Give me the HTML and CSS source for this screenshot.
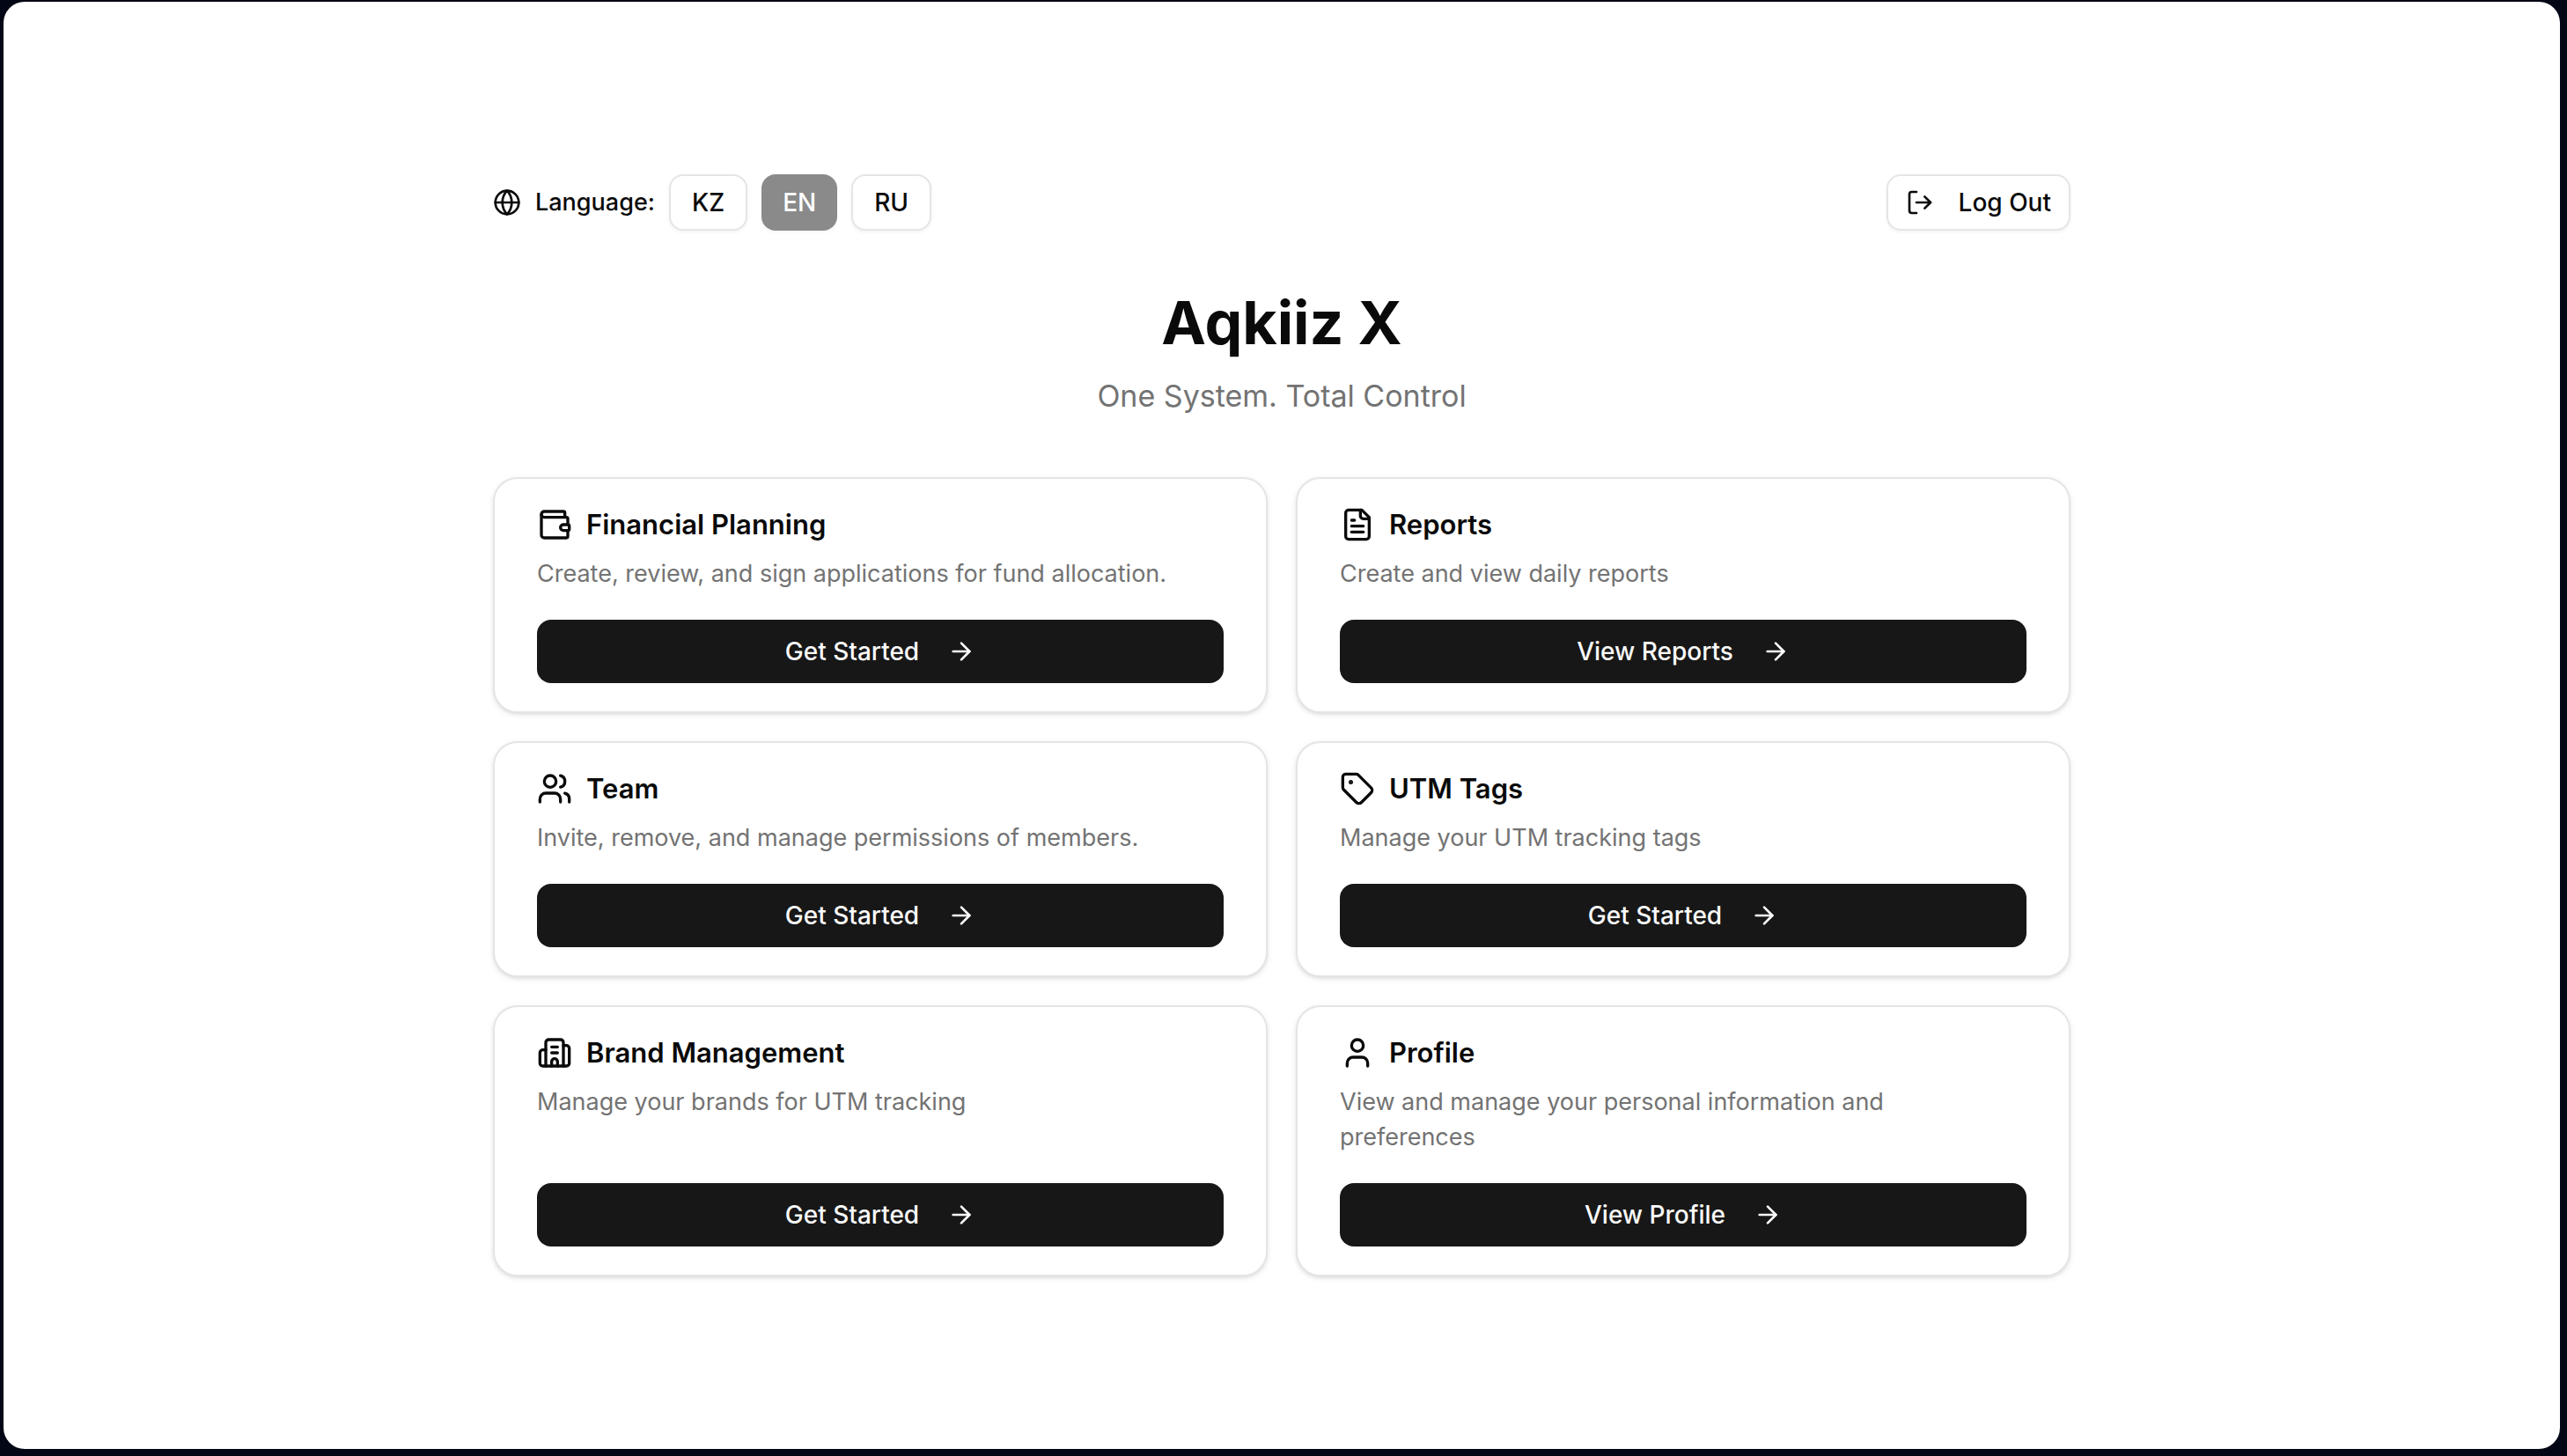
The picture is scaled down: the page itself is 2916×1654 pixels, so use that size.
FILE: index.html
```html
<!DOCTYPE html>
<html lang="en">
<head>
    <meta charset="UTF-8">
    <meta name="viewport" content="width=device-width, initial-scale=1.0">
    <title>Aqkiiz X</title>
    <link rel="stylesheet" href="styles.css">
</head>
<body>
    <div class="page">
        <main class="container">
            <!-- Language switcher and log out -->
            <header class="topbar">
                <div class="languages">
                    <svg class="icon" viewBox="0 0 24 24"><circle cx="12" cy="12" r="10"/><path d="M12 2a14.5 14.5 0 0 0 0 20 14.5 14.5 0 0 0 0-20"/><path d="M2 12h20"/></svg>
                    <span class="label">Language:</span>
                    <button type="button" class="btn-outline">KZ</button>
                    <button type="button" class="btn-outline active" disabled>EN</button>
                    <button type="button" class="btn-outline">RU</button>
                </div>
                <button type="button" class="btn-outline logout">
                    <svg class="icon" viewBox="0 0 24 24"><path d="M9 21H5a2 2 0 0 1-2-2V5a2 2 0 0 1 2-2h4"/><path d="m16 17 5-5-5-5"/><path d="M21 12H9"/></svg>
                    Log Out
                </button>
            </header>

            <div class="hero">
                <h1>Aqkiiz X</h1>
                <p>One System. Total Control</p>
            </div>

            <!-- Sections -->
            <div class="cards">
                <section class="card">
                    <h2>
                        <svg class="icon-lg" viewBox="0 0 24 24"><path d="M19 7V4a1 1 0 0 0-1-1H5a2 2 0 0 0 0 4h15a1 1 0 0 1 1 1v4h-3a2 2 0 0 0 0 4h3a1 1 0 0 0 1-1v-2a1 1 0 0 0-1-1"/><path d="M3 5v14a2 2 0 0 0 2 2h15a1 1 0 0 0 1-1v-4"/></svg>
                        Financial Planning
                    </h2>
                    <p>Create, review, and sign applications for fund allocation.</p>
                    <button type="button" class="btn">Get Started
                        <svg class="icon" viewBox="0 0 24 24"><path d="M5 12h14"/><path d="m12 5 7 7-7 7"/></svg>
                    </button>
                </section>

                <section class="card">
                    <h2>
                        <svg class="icon-lg" viewBox="0 0 24 24"><path d="M15 2H6a2 2 0 0 0-2 2v16a2 2 0 0 0 2 2h12a2 2 0 0 0 2-2V7Z"/><path d="M14 2v4a2 2 0 0 0 2 2h4"/><path d="M10 9H8"/><path d="M16 13H8"/><path d="M16 17H8"/></svg>
                        Reports
                    </h2>
                    <p>Create and view daily reports</p>
                    <button type="button" class="btn">View Reports
                        <svg class="icon" viewBox="0 0 24 24"><path d="M5 12h14"/><path d="m12 5 7 7-7 7"/></svg>
                    </button>
                </section>

                <section class="card">
                    <h2>
                        <svg class="icon-lg" viewBox="0 0 24 24"><path d="M16 21v-2a4 4 0 0 0-4-4H6a4 4 0 0 0-4 4v2"/><circle cx="9" cy="7" r="4"/><path d="M22 21v-2a4 4 0 0 0-3-3.87"/><path d="M16 3.13a4 4 0 0 1 0 7.75"/></svg>
                        Team
                    </h2>
                    <p>Invite, remove, and manage permissions of members.</p>
                    <button type="button" class="btn">Get Started
                        <svg class="icon" viewBox="0 0 24 24"><path d="M5 12h14"/><path d="m12 5 7 7-7 7"/></svg>
                    </button>
                </section>

                <section class="card">
                    <h2>
                        <svg class="icon-lg" viewBox="0 0 24 24"><path d="M12.586 2.586A2 2 0 0 0 11.172 2H4a2 2 0 0 0-2 2v7.172a2 2 0 0 0 .586 1.414l8.704 8.704a2.426 2.426 0 0 0 3.42 0l6.58-6.58a2.426 2.426 0 0 0 0-3.42z"/><circle class="dot" cx="7.5" cy="7.5" r=".5"/></svg>
                        UTM Tags
                    </h2>
                    <p>Manage your UTM tracking tags</p>
                    <button type="button" class="btn">Get Started
                        <svg class="icon" viewBox="0 0 24 24"><path d="M5 12h14"/><path d="m12 5 7 7-7 7"/></svg>
                    </button>
                </section>

                <section class="card">
                    <h2>
                        <svg class="icon-lg" viewBox="0 0 24 24"><path d="M10 12h4"/><path d="M10 8h4"/><path d="M14 21v-3a2 2 0 0 0-4 0v3"/><path d="M6 10H4a2 2 0 0 0-2 2v7a2 2 0 0 0 2 2h16a2 2 0 0 0 2-2V9a2 2 0 0 0-2-2h-2"/><path d="M6 21V5a2 2 0 0 1 2-2h8a2 2 0 0 1 2 2v16"/></svg>
                        Brand Management
                    </h2>
                    <p>Manage your brands for UTM tracking</p>
                    <button type="button" class="btn">Get Started
                        <svg class="icon" viewBox="0 0 24 24"><path d="M5 12h14"/><path d="m12 5 7 7-7 7"/></svg>
                    </button>
                </section>

                <section class="card">
                    <h2>
                        <svg class="icon-lg" viewBox="0 0 24 24"><path d="M19 21v-2a4 4 0 0 0-4-4H9a4 4 0 0 0-4 4v2"/><circle cx="12" cy="7" r="4"/></svg>
                        Profile
                    </h2>
                    <p>View and manage your personal information and preferences</p>
                    <button type="button" class="btn">View Profile
                        <svg class="icon" viewBox="0 0 24 24"><path d="M5 12h14"/><path d="m12 5 7 7-7 7"/></svg>
                    </button>
                </section>
            </div>
        </main>
    </div>
</body>
</html>
```

FILE: styles.css
```css
* {
    box-sizing: border-box;
}

body {
    margin: 0;
    padding: 2px 8px 8px 4px;
    min-height: 100vh;
    display: flex;
    background-color: #030614;
    color: #0a0a0a;
    font-family: Inter, "Liberation Sans", sans-serif;
    font-size: 27px;
    line-height: 40px;
}

h1, h2, p {
    margin: 0;
}

.page {
    flex: 1;
    display: flex;
    justify-content: center;
    align-items: center;
    padding: 32px;
    background-color: white;
    border-radius: 24px;
}

.container {
    width: 100%;
    max-width: 1792px;
}

.topbar {
    display: flex;
    justify-content: space-between;
    align-items: center;
    margin-bottom: 64px;
}

.languages {
    display: flex;
    align-items: center;
    gap: 16px;
}

.label {
    font-weight: 500;
}

.icon, .icon-lg {
    flex-shrink: 0;
    fill: none;
    stroke: currentColor;
    stroke-width: 2;
    stroke-linecap: round;
    stroke-linejoin: round;
}

.icon {
    width: 32px;
    height: 32px;
}

.icon-lg {
    width: 40px;
    height: 40px;
}

.dot {
    fill: currentColor;
}

button {
    display: flex;
    justify-content: center;
    align-items: center;
    font-family: inherit;
    font-size: 28px;
    font-weight: 500;
    line-height: 40px;
    border-radius: 16px;
    cursor: pointer;
}

.btn-outline {
    height: 64px;
    padding: 0 24px;
    color: #0a0a0a;
    background-color: white;
    border: 2px solid #e5e5e5;
    box-shadow: 0 2px 4px rgba(0, 0, 0, 0.05);
}

.btn-outline.active {
    color: white;
    background-color: #171717;
    border: none;
    opacity: 0.5;
}

.logout {
    gap: 28px;
    padding: 0 20px;
}

.hero {
    text-align: center;
    margin-bottom: 64px;
}

.hero h1 {
    font-size: 68px;
    font-weight: 700;
    line-height: 80px;
    margin-bottom: 16px;
}

.hero p {
    font-size: 34px;
    line-height: 56px;
    color: #737373;
}

.cards {
    display: grid;
    grid-template-columns: 1fr 1fr;
    gap: 32px;
}

.card {
    display: flex;
    flex-direction: column;
    padding: 32px 48px;
    background-color: white;
    border: 2px solid #e5e5e5;
    border-radius: 28px;
    box-shadow: 0 2px 6px rgba(0, 0, 0, 0.1), 0 2px 4px -2px rgba(0, 0, 0, 0.1);
}

.card h2 {
    display: flex;
    align-items: center;
    gap: 16px;
    font-size: 31px;
    font-weight: 600;
    line-height: 40px;
    margin-bottom: 16px;
}

.card p {
    color: #737373;
    padding-right: 16px;
    margin-bottom: 32px;
}

.btn {
    width: 100%;
    height: 72px;
    gap: 32px;
    margin-top: auto;
    color: #fafafa;
    background-color: #171717;
    border: none;
}
```
